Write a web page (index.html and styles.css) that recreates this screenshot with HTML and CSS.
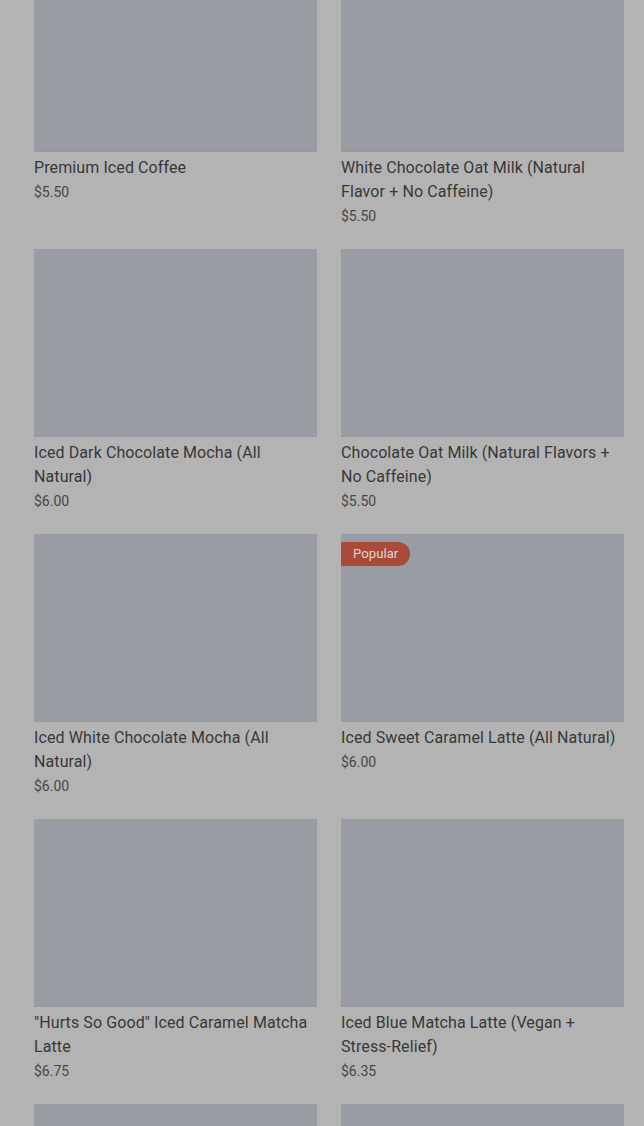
FILE: index.html
```html
<!DOCTYPE html>
<html lang="en">
<head>
    <meta charset="UTF-8">
    <meta name="viewport" content="width=device-width, initial-scale=1.0">
    <title>Menu</title>
    <link rel="stylesheet" href="styles.css">
</head>
<body>
    <div class="menu">
        <div class="grid">
            <div class="card">
                <div class="photo"></div>
                <div class="name">Premium Iced Coffee</div>
                <div class="price">$5.50</div>
            </div>
            <div class="card">
                <div class="photo"></div>
                <div class="name">White Chocolate Oat Milk (Natural Flavor + No Caffeine)</div>
                <div class="price">$5.50</div>
            </div>
            <div class="card">
                <div class="photo"></div>
                <div class="name">Iced Dark Chocolate Mocha (All Natural)</div>
                <div class="price">$6.00</div>
            </div>
            <div class="card">
                <div class="photo"></div>
                <div class="name">Chocolate Oat Milk (Natural Flavors + No Caffeine)</div>
                <div class="price">$5.50</div>
            </div>
            <div class="card">
                <div class="photo"></div>
                <div class="name">Iced White Chocolate Mocha (All Natural)</div>
                <div class="price">$6.00</div>
            </div>
            <div class="card">
                <div class="photo">
                    <span class="badge">Popular</span>
                </div>
                <div class="name">Iced Sweet Caramel Latte (All Natural)</div>
                <div class="price">$6.00</div>
            </div>
            <div class="card">
                <div class="photo"></div>
                <div class="name">"Hurts So Good" Iced Caramel Matcha Latte</div>
                <div class="price">$6.75</div>
            </div>
            <div class="card">
                <div class="photo"></div>
                <div class="name">Iced Blue Matcha Latte (Vegan + Stress-Relief)</div>
                <div class="price">$6.35</div>
            </div>
            <div class="card">
                <div class="photo"></div>
            </div>
            <div class="card">
                <div class="photo"></div>
            </div>
        </div>
    </div>
</body>
</html>
```

FILE: styles.css
```css
html, body {
    margin: 0;
    padding: 0;
}
body {
    font-family: Roboto, "Liberation Sans", sans-serif;
    background-color: #b3b3b3;
    height: 1126px;
    overflow: hidden;
}
.menu {
    padding: 0 20px 0 34px;
    margin-top: -36px;
}
.grid {
    display: grid;
    grid-template-columns: 283px 283px;
    column-gap: 24px;
    row-gap: 21px;
    align-items: start;
}
.card {
    height: 264px;
}
.photo {
    position: relative;
    height: 186px;
    background-color: #999ca3;
    border-bottom: 2px solid #97999e;
}
.badge {
    position: absolute;
    top: 8px;
    left: 0;
    height: 24px;
    line-height: 24px;
    padding: 0 12px 0 12px;
    font-size: 13px;
    letter-spacing: 0.1px;
    color: #e6d6d2;
    background-color: #a94a3a;
    border-radius: 0 12px 12px 0;
}
.name {
    margin-top: 4px;
    font-size: 16px;
    line-height: 24px;
    letter-spacing: 0.1px;
    color: #383838;
}
.price {
    font-size: 14px;
    line-height: 24px;
    color: #474747;
}
```
